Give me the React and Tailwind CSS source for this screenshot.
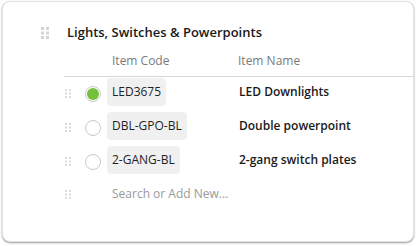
import React from 'react';

const items = [
  { code: 'LED3675', name: 'LED Downlights', checked: true },
  { code: 'DBL-GPO-BL', name: 'Double powerpoint', checked: false },
  { code: '2-GANG-BL', name: '2-gang switch plates', checked: false },
];

// little dotted grip used on the header and each row
function Grip({ big }) {
  if (big) {
    return (
      <svg width="8" height="12" viewBox="0 0 8 12" className="shrink-0">
        {[0, 4.5, 9].map((y) =>
          [0, 5].map((x) => <rect key={`${x}-${y}`} x={x} y={y} width="3" height="3" fill="#d4d4d4" />)
        )}
      </svg>
    );
  }
  return (
    <svg width="6" height="9" viewBox="0 0 6 9" className="shrink-0">
      {[0, 3.5, 7].map((y) =>
        [0, 4].map((x) => <rect key={`${x}-${y}`} x={x} y={y} width="2" height="2" fill="#dadada" />)
      )}
    </svg>
  );
}

function Radio({ checked }) {
  return (
    <div className="w-[16px] h-[16px] rounded-full border border-[#c8c8c8] bg-white flex items-center justify-center shrink-0">
      {checked && <div className="w-[12px] h-[12px] rounded-full bg-[#72c03c]" />}
    </div>
  );
}

export default function App() {
  return (
    <div className="w-[418px] h-[246px] bg-white overflow-hidden pt-[1px] pl-[2px]" style={{ fontFamily: '"Open Sans", "Liberation Sans", sans-serif' }}>
      <div className="w-[412px] h-[241px] rounded-lg border border-[#e2e2e2] bg-white shadow-[0_1px_2px_rgba(0,0,0,0.4)] pt-[21px]">
        {/* Section title */}
        <div className="flex items-center h-[20px] pl-[38px]">
          <Grip big />
          <span className="ml-[18px] text-[13px] font-semibold text-[#1a1a1a]">Lights, Switches &amp; Powerpoints</span>
        </div>

        <div className="ml-[61px] mt-[7px]">
          {/* Column headings */}
          <div className="flex h-[27px] border-b border-[#d6d6d6] text-[12px] text-[#7a7a7a] leading-[22px]">
            <span className="ml-[48px] w-[126px]">Item Code</span>
            <span>Item Name</span>
          </div>

          <div className="mt-[1px] flex flex-col gap-[6px]">
            {items.map((it) => (
              <div key={it.code} className="flex items-center h-[28px]">
                <div className="ml-[1px] mt-[3px]"><Grip /></div>
                <div className="ml-[14px] mt-[3px]"><Radio checked={it.checked} /></div>
                <div className="ml-[6px] w-[132px]">
                  <span className="inline-flex items-center h-[28px] px-[5px] rounded-[4px] bg-[#f0f0f0] text-[12px] text-[#1f1f1f]">{it.code}</span>
                </div>
                <span className="text-[12px] font-semibold text-[#1a1a1a]">{it.name}</span>
              </div>
            ))}
            <div className="flex items-center h-[28px]">
              <div className="ml-[1px] mt-[1px]"><Grip /></div>
              <span className="ml-[41px] text-[12px] text-[#9a9a9a]">Search or Add New...</span>
            </div>
          </div>
        </div>
      </div>
    </div>
  );
}
